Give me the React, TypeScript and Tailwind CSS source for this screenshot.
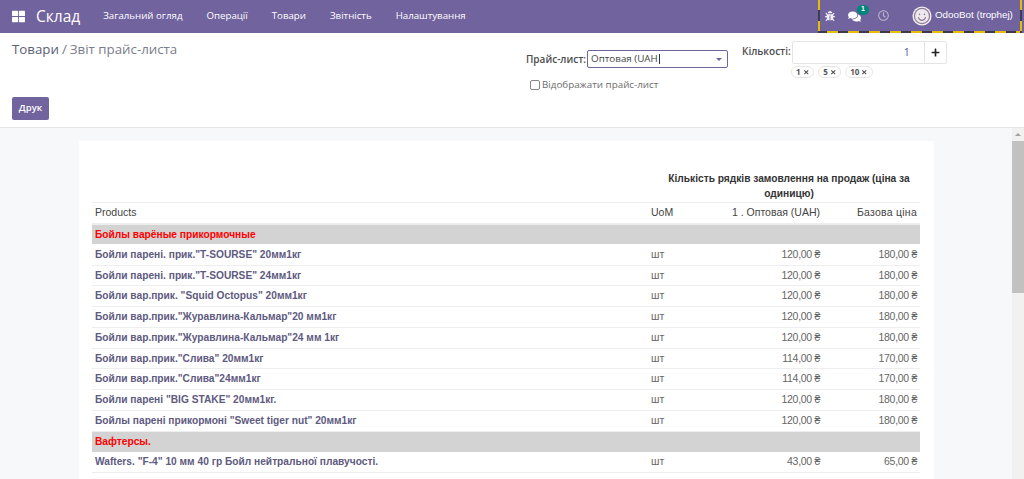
import { FaBug, FaComments, FaPlus, FaRegClock, FaThLarge, FaTimes } from "react-icons/fa";

const nav = ["Загальний огляд", "Операції", "Товари", "Звітність", "Налаштування"];

type Row =
  | { group: string }
  | { name: string; price: string; base: string };

const rows: Row[] = [
  { group: "Бойлы варёные прикормочные" },
  { name: 'Бойли парені. прик."T-SOURSE" 20мм1кг', price: "120,00 ₴", base: "180,00 ₴" },
  { name: 'Бойли парені. прик."T-SOURSE" 24мм1кг', price: "120,00 ₴", base: "180,00 ₴" },
  { name: 'Бойли вар.прик. "Squid Octopus" 20мм1кг', price: "120,00 ₴", base: "180,00 ₴" },
  { name: 'Бойли вар.прик."Журавлина-Кальмар"20 мм1кг', price: "120,00 ₴", base: "180,00 ₴" },
  { name: 'Бойли вар.прик."Журавлина-Кальмар"24 мм 1кг', price: "120,00 ₴", base: "180,00 ₴" },
  { name: 'Бойли вар.прик."Слива" 20мм1кг', price: "114,00 ₴", base: "170,00 ₴" },
  { name: 'Бойли вар.прик."Слива"24мм1кг', price: "114,00 ₴", base: "170,00 ₴" },
  { name: 'Бойли парені "BIG STAKE" 20мм1кг.', price: "120,00 ₴", base: "180,00 ₴" },
  { name: 'Бойлы парені прикормоні "Sweet tiger nut" 20мм1кг', price: "120,00 ₴", base: "180,00 ₴" },
  { group: "Вафтерсы." },
  { name: 'Wafters. "F-4" 10 мм 40 гр Бойл нейтральної плавучості.', price: "43,00 ₴", base: "65,00 ₴" },
  { name: 'Wafters. "F-6" 10 мм 40 гр Бойл нейтральної плавучості.', price: "43,00 ₴", base: "65,00 ₴" },
];

function Avatar() {
  return (
    <svg viewBox="0 0 24 24" className="size-[20px] shrink-0">
      <circle cx="12" cy="12" r="11.500" fill="#f3eef0" />
      <circle cx="12" cy="12" r="9.800" fill="#8d7c99" />
      <circle cx="12" cy="12" r="8.300" fill="#efe9ee" />
      <circle cx="9" cy="10" r="1" fill="#8d7c99" />
      <circle cx="15" cy="10" r="1" fill="#8d7c99" />
      <path d="M7.500 13.500c1 2.600 2.700 3.700 4.500 3.700s3.500-1.100 4.500-3.700" fill="none" stroke="#8d7c99" strokeWidth="1.300" />
    </svg>
  );
}

function QtyChip({ n }: { n: number }) {
  return (
    <span className="flex h-[12px] items-center gap-[2px] rounded-full border border-[#e6e6e6] px-[4px] text-[8px] font-bold text-[#555]">
      {n} <FaTimes className="size-[6.500px]" />
    </span>
  );
}

export default function App() {
  return (
    <div className="flex h-[479px] w-[1024px] flex-col overflow-hidden bg-white font-['Open_Sans',sans-serif] text-[#4c4c4c]">
      {/* Navbar */}
      <header className="flex h-[33px] shrink-0 items-center bg-[#71639e] text-white">
        <FaThLarge className="ml-3 size-[13px]" />
        <span className="ml-[11px] text-[15.500px] leading-none">Склад</span>
        <nav className="ml-[23px] flex gap-[24px] text-[9.700px] font-medium">
          {nav.map((item) => (
            <span key={item}>{item}</span>
          ))}
        </nav>
        {/* debug-mode marker around the systray */}
        <div className="mr-[2px] ml-auto flex h-[33px] w-[204px]">
          <div className="h-full w-[2px] bg-[repeating-linear-gradient(180deg,#e6bd00_0_10px,#3e3a52_10px_21px)]" />
          <div className="flex min-w-0 flex-1 flex-col">
            <div className="flex flex-1 items-center pl-[5px] font-['Liberation_Sans',sans-serif]">
              <FaBug className="size-[10px] text-white/90" />
              <span className="relative mt-[1px] ml-[13px]">
                <FaComments className="size-[13px] text-white" />
                <span className="absolute -top-[5px] -right-[8px] flex h-[10px] w-[12px] items-center justify-center rounded-full bg-[#00857c] text-[7px] font-bold">
                  1
                </span>
              </span>
              <FaRegClock className="ml-[17px] size-[11px] text-white/50" />
              <span className="ml-[23px] flex items-center gap-[3px] text-[9.800px]">
                <Avatar />
                OdooBot (trophej)
              </span>
            </div>
            <div className="h-[2px] bg-[repeating-linear-gradient(90deg,#3e3a52_0_7px,#e6bd00_7px_18px,#3e3a52_18px_21px)]" />
          </div>
          <div className="h-full w-[2px] bg-[repeating-linear-gradient(180deg,#e6bd00_0_10px,#3e3a52_10px_21px)]" />
        </div>
      </header>

      {/* Control panel */}
      <section className="flex h-[95px] shrink-0 border-b border-[#e4e4e4]">
        <div className="flex w-[512px] flex-col justify-between pt-[8px] pb-[7px] pl-3">
          <div className="text-[13.300px] leading-[17px] text-[#7a7d8c]">
            <span className="text-[#5a6073]">Товари</span>
            <span className="mx-[3px]">/</span>
            Звіт прайс-листа
          </div>
          <button className="flex h-[23px] w-[37px] items-center justify-center rounded-[2px] bg-[#71639e] text-[9.500px] font-semibold text-white">
            Друк
          </button>
        </div>
        <div className="flex flex-col pt-[17px] pl-[14px]">
          <div className="flex items-center gap-[1px]">
            <label className="text-[10px] font-semibold text-[#4c4c4c]">Прайс-лист:</label>
            <div className="flex h-[18px] w-[141px] items-center justify-between rounded-[2px] border border-[#71639e] pr-[5px] pl-[3px] text-[9.800px] text-[#444]">
              <span className="border-r border-[#333] pr-[1px] leading-none">Оптовая (UAH</span>
              <span className="size-0 border-x-[3px] border-t-[3px] border-x-transparent border-t-[#71639e]" />
            </div>
          </div>
          <label className="mt-[10px] ml-[4px] flex items-center gap-[2px] text-[9.800px] text-[#6c6c6c]">
            <span className="size-[10px] rounded-[2px] border border-[#888] bg-white" />
            Відображати прайс-лист
          </label>
        </div>
        <div className="flex flex-col pt-[8px] pl-[14px]">
          <div className="flex items-start gap-[1px]">
            <label className="pt-[3px] text-[10px] font-semibold text-[#4c4c4c]">Кількості:</label>
            <div className="flex h-[23px] w-[155px] items-center rounded-[2px] border border-[#e4e4e4]">
              <span className="flex-1 pr-[14px] text-right text-[10.500px] text-[#4f4f9a]">1</span>
              <span className="flex h-full w-[22px] items-center justify-center border-l border-[#e4e4e4] text-[#222]">
                <FaPlus className="size-[9px]" />
              </span>
            </div>
          </div>
          <div className="mt-[2px] ml-[49px] flex gap-[4px]">
            <QtyChip n={1} />
            <QtyChip n={5} />
            <QtyChip n={10} />
          </div>
        </div>
      </section>

      {/* Report */}
      <div className="flex min-h-0 flex-1 bg-[#f7f8fa]">
        <main className="min-w-0 flex-1 overflow-hidden pt-[13px] pl-[79px]">
          <div className="w-[855px] bg-white px-[13px] pt-[30px] font-['Liberation_Sans',sans-serif] text-[10.500px] text-[#555]">
            <table className="w-[828px] table-fixed border-collapse">
              <colgroup>
                <col className="w-[556px]" />
                <col className="w-[50px]" />
                <col className="w-[122px]" />
                <col />
              </colgroup>
              <thead>
                <tr>
                  <th />
                  <th colSpan={3} className="h-[31px] pt-[1px] pl-[10px] text-center align-top text-[10.200px] leading-[14.500px] font-bold text-[#333]">
                    Кількість рядків замовлення на продаж (ціна за одиницю)
                  </th>
                </tr>
                <tr className="h-[21.500px] border-t border-b-2 border-[#eeeeee] text-[#444]">
                  <th className="pl-[3px] text-left font-normal">Products</th>
                  <th className="pl-[3px] text-left font-normal">UoM</th>
                  <th className="text-right font-normal">1 . Оптовая (UAH)</th>
                  <th className="pr-[3px] text-right font-normal tracking-[0.25px]">Базова ціна</th>
                </tr>
              </thead>
              <tbody>
                {rows.map((row) =>
                  "group" in row ? (
                    <tr key={row.group} className="h-[20.750px] bg-[#d3d3d3]">
                      <td colSpan={4} className="pl-[3px] text-[10.200px] font-bold text-[#ff0000]">
                        {row.group}
                      </td>
                    </tr>
                  ) : (
                    <tr key={row.name} className="h-[20.750px] border-b border-[#eeeeee] last:[&>td]:pt-[9px]">
                      <td className="pl-[3px] text-[10.200px] font-bold text-[#5e5a80]">{row.name}</td>
                      <td className="pl-[3px] text-[#666]">шт</td>
                      <td className="text-right tracking-[-0.3px] text-[#666]">{row.price}</td>
                      <td className="pr-[3px] text-right tracking-[-0.3px] text-[#666]">{row.base}</td>
                    </tr>
                  ),
                )}
              </tbody>
            </table>
          </div>
        </main>
        {/* Scrollbar */}
        <div className="flex w-3 shrink-0 flex-col items-center bg-[#f1f1f1]">
          <span className="mt-[5px] size-0 border-x-[3px] border-b-[3px] border-x-transparent border-b-[#a3a3a3]" />
          <div className="mt-[5px] h-[152px] w-full bg-[#c1c1c1]" />
        </div>
      </div>
    </div>
  );
}
